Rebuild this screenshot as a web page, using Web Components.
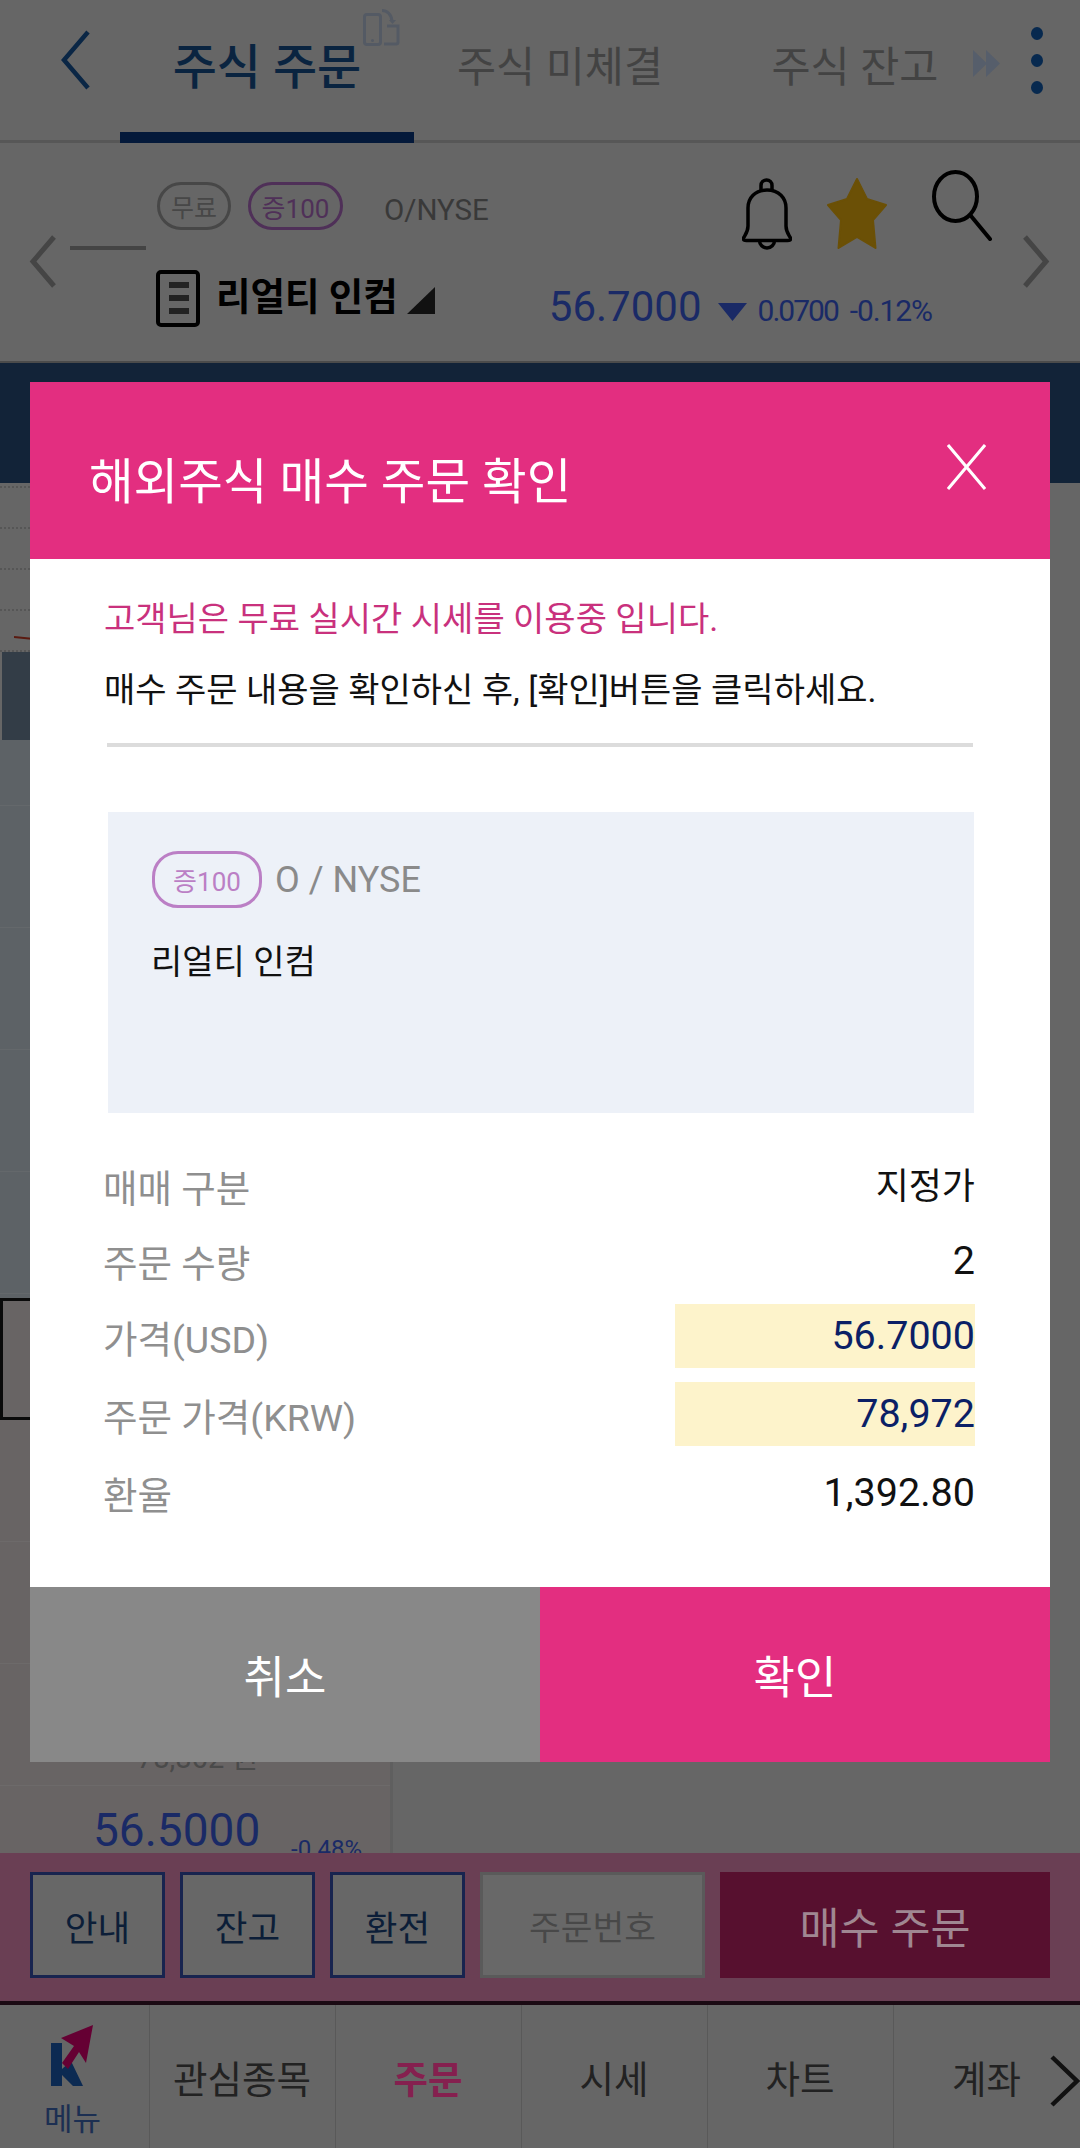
<!DOCTYPE html>
<html lang="ko">
<head>
<meta charset="utf-8">
<title>해외주식 매수 주문 확인</title>
<style>
  html, body { margin: 0; padding: 0; }
  body {
    position: relative;
    width: 1080px;
    height: 2148px;
    overflow: hidden;
    background: #666;
    font-family: Roboto, "Noto Sans CJK KR", sans-serif;
    display: flex;
    flex-direction: column;
  }
</style>
</head>
<body>
  <order-tabs></order-tabs>
  <stock-summary></stock-summary>
  <order-book></order-book>
  <action-bar></action-bar>
  <bottom-nav></bottom-nav>

  <confirm-dialog>
    <span slot="title">해외주식 매수 주문 확인</span>
    <order-notice></order-notice>
    <stock-card></stock-card>
    <detail-row label="매매 구분" value="지정가" style="padding-top:10px;--value-size:36px;--value-shift:3px"></detail-row>
    <detail-row label="주문 수량" value="2" style="padding-top:5px"></detail-row>
    <detail-row label="가격(USD)" value="56.7000" highlight></detail-row>
    <detail-row label="주문 가격(KRW)" value="78,972" highlight></detail-row>
    <detail-row label="환율" value="1,392.80" style="padding-top:1px"></detail-row>
  </confirm-dialog>

<script>
class OrderTabs extends HTMLElement {
  constructor() {
    super();
    this.attachShadow({ mode: "open" });
  }
  connectedCallback() {
    this.shadowRoot.innerHTML = `
      <style>
        :host { display: block; position: relative; height: 143px; flex: none; box-sizing: border-box; border-bottom: 3px solid #575757; }
        .row { display: flex; align-items: flex-start; height: 143px; padding-left: 60px; box-sizing: border-box; }
        .back { width: 30px; height: 60px; margin-top: 30px; flex: none; }
        .tab { height: 143px; box-sizing: border-box; padding-top: 35px; text-align: center; flex: none; line-height: 66px; white-space: nowrap; color: #434343; font-size: 42.500px; }
        .tab.on { width: 294px; margin-left: 30px; color: #0a2440; font-size: 48px; font-weight: 500; border-bottom: 11px solid #04193a; }
        .t2 { width: 292px; }
        .t3 { width: 298px; }
        .more { width: 27px; height: 27px; margin: 50px 0 0 -31px; flex: none; }
        .dots { display: flex; flex-direction: column; gap: 14px; margin: 27px 0 0 31px; flex: none; }
        .dots i { width: 12px; height: 13px; border-radius: 50%; background: #07294f; }
        .rotate { position: absolute; left: 363px; top: 9px; width: 37px; height: 37px; }
      </style>
      <div class="row">
        <svg class="back" viewBox="0 0 30 60"><path d="M28 2 4 30l24 28" fill="none" stroke="#0a2645" stroke-width="4.500"/></svg>
        <div class="tab on">주식 주문</div>
        <div class="tab t2">주식 미체결</div>
        <div class="tab t3">주식 잔고</div>
        <svg class="more" viewBox="0 0 27 27"><path d="M0 0 14 13.500 0 27zM13 0 27 13.500 13 27z" fill="#565e6b"/></svg>
        <div class="dots"><i></i><i></i><i></i></div>
      </div>
      <svg class="rotate" viewBox="0 0 37 37" fill="none" stroke="#545a64" stroke-width="3">
        <rect x="1.500" y="5.500" width="16" height="30" rx="2.500"/>
        <path d="M21 35h12a2 2 0 0 0 2-2V17H24M19 1.500c5 0 9.500 4 10 10.500"/>
        <path d="M26 11h7l-3.500 4z" fill="#545a64" stroke="none"/>
        <circle cx="9.500" cy="31.500" r="1.500" fill="#545a64" stroke="none"/>
      </svg>`;
  }
}

class StatusPill extends HTMLElement {
  constructor() {
    super();
    this.attachShadow({ mode: "open" });
  }
  connectedCallback() {
    this.shadowRoot.innerHTML = `
      <style>
        :host { display: inline-flex; align-items: center; justify-content: center; box-sizing: border-box; border: 3px solid currentColor; border-radius: 24px; white-space: nowrap; flex: none; }
      </style>
      <slot></slot>`;
  }
}

class StockSummary extends HTMLElement {
  constructor() {
    super();
    this.attachShadow({ mode: "open" });
  }
  connectedCallback() {
    this.shadowRoot.innerHTML = `
      <style>
        :host { display: flex; height: 220px; flex: none; box-sizing: border-box; border-bottom: 2px solid #4b4b4b; }
        .nav { width: 28px; height: 53px; margin-top: 92px; flex: none; }
        .prev { margin-left: 29px; }
        .next { margin: 92px 30px 0 12px; }
        .main { flex: 1; margin-left: 13px; padding-top: 27px; }
        .top { display: flex; align-items: flex-start; height: 76px; padding-left: 87px; }
        status-pill { height: 48px; margin-top: 12px; font-size: 25px; }
        .free { width: 74px; color: #474747; }
        .size { width: 95px; margin-left: 17px; color: #4f3058; font-size: 26px; }
        .symbol { margin: 23px 0 0 41px; font-size: 29.500px; line-height: 34px; color: #393939; }
        .bell { width: 50px; height: 72px; margin: 8px 0 0 253px; flex: none; }
        .star { width: 60px; height: 71px; margin: 8px 0 0 35px; flex: none; }
        .search { width: 60px; height: 71px; margin-left: 45px; flex: none; }
        .dash { width: 76px; height: 4px; background: #444; }
        .bottom { display: flex; align-items: flex-start; margin-top: 20px; padding-left: 86px; }
        .doc { width: 44px; height: 57px; flex: none; }
        .name { margin: 2px 0 0 16px; font-size: 37.500px; line-height: 50px; font-weight: 700; color: #000; white-space: nowrap; }
        .tri { width: 28px; height: 27px; margin: 17px 0 0 9px; flex: none; }
        .price { display: flex; align-items: baseline; margin: 14px 0 0 114px; color: #1a2a66; white-space: nowrap; }
        .now { font-size: 42px; line-height: 46px; }
        .arrow { width: 29px; height: 18px; margin-left: 16px; flex: none; }
        .chg { margin-left: 11px; font-size: 30px; letter-spacing: -2px; }
        .pct { margin-left: 12px; font-size: 30px; letter-spacing: -1.100px; }
      </style>
      <svg class="nav prev" viewBox="0 0 28 53"><path d="M25 2 4 26.500 25 51" fill="none" stroke="#454545" stroke-width="5"/></svg>
      <div class="main">
        <div class="top">
          <status-pill class="free">무료</status-pill>
          <status-pill class="size">증100</status-pill>
          <span class="symbol">O/NYSE</span>
          <svg class="bell" viewBox="0 0 50 72" fill="none" stroke="#000" stroke-width="3.500">
            <path d="M19 14V7.500a5.500 5.500 0 0 1 11 0V14"/>
            <path d="M25 12C13 12 6 20 6 30v18c0 6-3 9-4.500 12-.5 2 1 2.500 3 2.500h41c2 0 3.500-.5 3-2.500C47 57 44 54 44 48V30c0-10-7-18-19-18z"/>
            <path d="M17.500 62.500a7.500 7.500 0 0 0 15 0"/>
          </svg>
          <svg class="star" viewBox="0 0 60 71"><path d="M30 1 40 21 59 27 46 42 48.500 70 30 59 11.500 70 14 42 1 27 20 21z" fill="#6b5006" stroke="#6b5006" stroke-width="2" stroke-linejoin="round"/></svg>
          <svg class="search" viewBox="0 0 60 71" fill="none" stroke="#000" stroke-width="4" stroke-linecap="round">
            <ellipse cx="23.500" cy="26.500" rx="21.500" ry="24.500"/>
            <path d="M39 46 58 69"/>
          </svg>
        </div>
        <div class="dash"></div>
        <div class="bottom">
          <svg class="doc" viewBox="0 0 44 57">
            <rect x="2" y="2" width="40" height="53" rx="3" fill="none" stroke="#000" stroke-width="4"/>
            <path d="M13 12h20v6H13zM13 25h20v6H13zM13 38h20v6H13z" fill="#222"/>
          </svg>
          <span class="name">리얼티 인컴</span>
          <svg class="tri" viewBox="0 0 28 27"><path d="M28 0v27H0z" fill="#111"/></svg>
          <div class="price">
            <span class="now">56.7000</span>
            <svg class="arrow" viewBox="0 0 29 18"><path d="M0 0h29L14.500 18z" fill="#1a2a66"/></svg>
            <span class="chg">0.0700</span>
            <span class="pct">-0.12%</span>
          </div>
        </div>
      </div>
      <svg class="nav next" viewBox="0 0 28 53"><path d="M3 2 24 26.500 3 51" fill="none" stroke="#454545" stroke-width="5"/></svg>`;
  }
}

class OrderBook extends HTMLElement {
  constructor() {
    super();
    this.attachShadow({ mode: "open" });
  }
  connectedCallback() {
    this.shadowRoot.innerHTML = `
      <style>
        :host { display: block; flex: 1; min-height: 0; overflow: hidden; }
        .band { height: 120px; background: #122338; }
        .grid { display: flex; height: 1370px; }
        .left { width: 390px; flex: none; border-right: 3px solid #5f5f5f; }
        .chart { position: relative; height: 169px; }
        .chart div { height: 41px; box-sizing: border-box; border-bottom: 2px dotted #565656; }
        .chart div:first-child { height: 5px; }
        .tick { position: absolute; left: 14px; top: 153px; width: 20px; height: 4px; }
        .now { height: 88px; margin-left: 2px; background: #333d47; }
        .ask { background: #5d6266; height: 558px; }
        .ask div { height: 122px; box-sizing: border-box; border-bottom: 1px solid #64686b; }
        .ask div:first-child { height: 66px; }
        .bid { background: #686464; height: 555px; overflow: hidden; }
        .bid .row { height: 122px; box-sizing: border-box; border-bottom: 1px solid #6d6a6a; position: relative; }
        .bid .box { border: 3px solid #0a0a0a; border-right: 0; margin-left: 0; }
        .krw { position: absolute; left: 137px; bottom: 9px; font-size: 29px; line-height: 36px; color: #4a4a4a; white-space: nowrap; }
        .px { position: absolute; left: 93px; top: 20px; font-size: 46px; line-height: 48px; color: #1a2a66; }
        .rate { position: absolute; left: 291px; top: 49px; font-size: 24px; line-height: 28px; color: #1a2a66; }
      </style>
      <div class="band"></div>
      <div class="grid">
        <div class="left">
          <div class="chart">
            <div></div><div></div><div></div><div></div><div></div>
            <svg class="tick" viewBox="0 0 20 4"><path d="M0 1l20 2" stroke="#5a1a10" stroke-width="2"/></svg>
          </div>
          <div class="now"></div>
          <div class="ask"><div></div><div></div><div></div><div></div><div></div></div>
          <div class="bid">
            <div class="row box"></div>
            <div class="row"></div>
            <div class="row"></div>
            <div class="row"><span class="krw">78,862 원</span></div>
            <div class="row"><span class="px">56.5000</span><span class="rate">-0.48%</span></div>
          </div>
        </div>
      </div>`;
  }
}

class ActionBar extends HTMLElement {
  constructor() {
    super();
    this.attachShadow({ mode: "open" });
  }
  connectedCallback() {
    this.shadowRoot.innerHTML = `
      <style>
        :host { display: flex; gap: 15px; height: 152px; flex: none; box-sizing: border-box; padding: 19px 30px 0; background: #6a3f54; border-bottom: 4px solid #1b0a13; }
        .btn { display: flex; align-items: center; justify-content: center; box-sizing: border-box; height: 106px; flex: none; white-space: nowrap; font-size: 35.500px; }
        .plain { width: 135px; border: 3px solid #18244f; background: #676767; color: #0c1e38; }
        .number { width: 225px; border: 3px solid #5a5a5a; background: #686868; color: #484848; font-size: 34.500px; }
        .buy { width: 330px; background: #57102f; color: #a08792; font-size: 43.500px; }
      </style>
      <div class="btn plain">안내</div>
      <div class="btn plain">잔고</div>
      <div class="btn plain">환전</div>
      <div class="btn number">주문번호</div>
      <div class="btn buy">매수 주문</div>`;
  }
}

class BottomNav extends HTMLElement {
  constructor() {
    super();
    this.attachShadow({ mode: "open" });
  }
  connectedCallback() {
    this.shadowRoot.innerHTML = `
      <style>
        :host { display: flex; position: relative; height: 143px; flex: none; overflow: hidden; }
        .cell { display: flex; align-items: center; justify-content: center; width: 186px; flex: none; box-sizing: border-box; border-right: 1px solid #595959; font-size: 37.500px; color: #222; white-space: nowrap; }
        .menu { width: 149.500px; flex-direction: column; justify-content: flex-start; align-items: flex-start; padding: 20px 0 0 44px; }
        .menu svg { width: 42px; height: 61px; margin-left: 7px; flex: none; }
        .menu span { font-size: 31px; line-height: 36px; color: #1c2f52; margin-top: 16px; }
        .on { color: #85204f; font-weight: 700; }
        .next { position: absolute; left: 1049px; top: 50px; width: 31px; height: 52px; }
      </style>
      <div class="cell menu">
        <svg viewBox="0 0 42 61">
          <path d="M0 18h11v43H0zM11 44l9-8 12 25H22L11 50z" fill="#0c2a52"/>
          <path d="M42 0 35 38 28 27 17 44 11 38 23 21 10 13z" fill="#650033"/>
        </svg>
        <span>메뉴</span>
      </div>
      <div class="cell">관심종목</div>
      <div class="cell on">주문</div>
      <div class="cell">시세</div>
      <div class="cell">차트</div>
      <div class="cell" style="border:0">계좌</div>
      <svg class="next" viewBox="0 0 31 52"><path d="M3 2 28 26 3 50" fill="none" stroke="#111" stroke-width="4.500"/></svg>`;
  }
}

class ConfirmDialog extends HTMLElement {
  constructor() {
    super();
    this.attachShadow({ mode: "open" });
  }
  connectedCallback() {
    this.shadowRoot.innerHTML = `
      <style>
        :host { position: absolute; left: 30px; top: 382px; width: 1020px; height: 1380px; display: flex; flex-direction: column; background: #fff; }
        header { display: flex; align-items: flex-start; justify-content: space-between; height: 177px; flex: none; background: #e32e80; color: #fff; font-size: 48.500px; box-sizing: border-box; padding: 66px 64px 0 59px; line-height: 70px; }
        .close { width: 39px; height: 46px; margin-top: -4px; }
        .body { flex: 1; min-height: 0; padding: 35px 75px 0 73px; }
        .foot { display: flex; height: 175px; flex: none; }
        .foot div { flex: 1; display: flex; align-items: center; justify-content: center; color: #fff; font-size: 45px; box-sizing: border-box; }
        .cancel { background: #888; }
        .ok { background: #e32e80; }
      </style>
      <header>
        <slot name="title"></slot>
        <svg class="close" viewBox="0 0 39 46"><path d="M1 1 38 45M38 1 1 45" fill="none" stroke="#fff" stroke-width="3"/></svg>
      </header>
      <div class="body"><slot></slot></div>
      <div class="foot"><div class="cancel">취소</div><div class="ok">확인</div></div>`;
  }
}

class OrderNotice extends HTMLElement {
  constructor() {
    super();
    this.attachShadow({ mode: "open" });
  }
  connectedCallback() {
    this.shadowRoot.innerHTML = `
      <style>
        :host { display: block; font-size: 34px; line-height: 50px; white-space: nowrap; padding-left: 4px; }
        .free { color: #c9317d; margin-left: -3px; }
        .ask { color: #111; margin: 21px 0 0 -3px; }
        hr { border: 0; height: 4px; background: #dcdcdc; margin: 28px 2px 0 0; }
      </style>
      <div class="free">고객님은 무료 실시간 시세를 이용중 입니다.</div>
      <div class="ask">매수 주문 내용을 확인하신 후, [확인]버튼을 클릭하세요.</div>
      <hr>`;
  }
}

class StockCard extends HTMLElement {
  constructor() {
    super();
    this.attachShadow({ mode: "open" });
  }
  connectedCallback() {
    this.shadowRoot.innerHTML = `
      <style>
        :host { display: block; height: 301px; margin: 65px 1px 35px 5px; box-sizing: border-box; padding: 39px 0 0 44px; background: #edf1f8; }
        .top { display: flex; align-items: center; }
        status-pill { width: 110px; height: 57px; border-radius: 26px; color: #bb7fc5; font-size: 26px; }
        .symbol { margin-left: 13px; font-size: 36px; color: #8a8a8a; white-space: nowrap; }
        .name { margin: 29px 0 0 -1px; font-size: 34px; line-height: 50px; color: #111; }
      </style>
      <div class="top"><status-pill>증100</status-pill><span class="symbol">O / NYSE</span></div>
      <div class="name">리얼티 인컴</div>`;
  }
}

class DetailRow extends HTMLElement {
  constructor() {
    super();
    this.attachShadow({ mode: "open" });
  }
  connectedCallback() {
    this.shadowRoot.innerHTML = `
      <style>
        :host { display: flex; align-items: center; justify-content: space-between; box-sizing: border-box; height: 64px; margin-bottom: 14px; }
        .label { font-size: 37.500px; color: #8f8f8f; white-space: nowrap; }
        .value { font-size: var(--value-size, 39.500px); color: #111; white-space: nowrap; line-height: 54px; text-align: right; margin-top: var(--value-shift, 0); }
        :host([highlight]) .value { width: 300px; line-height: 64px; background: #fdf3cb; color: #0b1f66; }
      </style>
      <span class="label">${this.getAttribute("label")}</span>
      <span class="value">${this.getAttribute("value")}</span>`;
  }
}

customElements.define("order-tabs", OrderTabs);
customElements.define("status-pill", StatusPill);
customElements.define("stock-summary", StockSummary);
customElements.define("order-book", OrderBook);
customElements.define("action-bar", ActionBar);
customElements.define("bottom-nav", BottomNav);
customElements.define("confirm-dialog", ConfirmDialog);
customElements.define("order-notice", OrderNotice);
customElements.define("stock-card", StockCard);
customElements.define("detail-row", DetailRow);
</script>
</body>
</html>
